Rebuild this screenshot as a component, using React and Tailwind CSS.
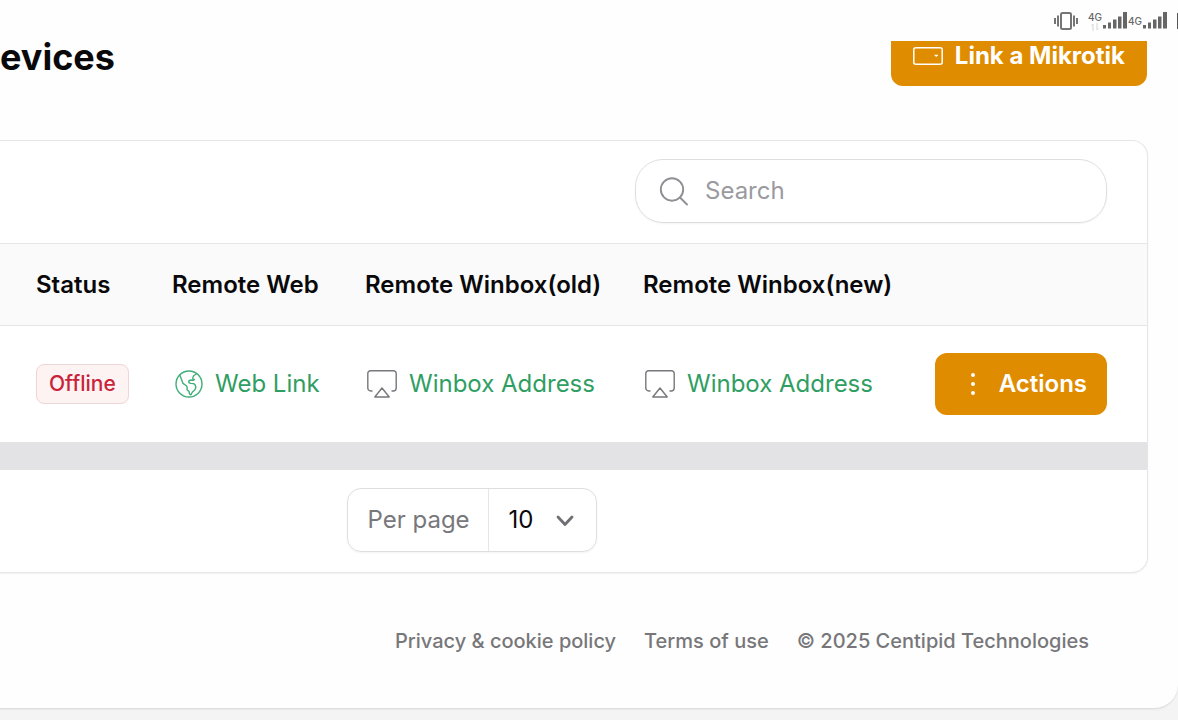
import React, { useState } from 'react'

const footerLinks = ['Privacy & cookie policy', 'Terms of use']
const devices = [{ id: 1, status: 'Offline' }]

function SignalBars() {
  return (
    <svg width="24" height="17" viewBox="0 0 24 17" fill="#666" aria-hidden="true">
      <rect x="0" y="13" width="3" height="3.5" />
      <rect x="5" y="10.5" width="3" height="6" />
      <rect x="10" y="7.5" width="3.5" height="9" />
      <rect x="15" y="4.5" width="3.5" height="12" />
      <rect x="20" y="0" width="4" height="16.5" />
    </svg>
  )
}

function VibrateIcon() {
  return (
    <svg width="24" height="18" viewBox="0 0 24 18" fill="none" stroke="#757575" strokeWidth="2" aria-hidden="true">
      <rect x="7" y="1" width="10" height="16" rx="1.5" />
      <path d="M4 3.5v11M20 3.5v11M1 6v6M23 6v6" />
    </svg>
  )
}

function DeviceIcon() {
  return (
    <svg width="30" height="18" viewBox="0 0 30 18" fill="none" stroke="currentColor" strokeWidth="1.5" aria-hidden="true">
      <rect x="0.8" y="0.8" width="28.4" height="16.4" rx="2" />
      <path d="M21.5 8h3.6l-1.8 1.7z" fill="currentColor" strokeWidth="0.5" />
    </svg>
  )
}

function SearchIcon() {
  return (
    <svg width="30" height="30" viewBox="0 0 30 30" fill="none" stroke="#8f8f94" strokeWidth="1.9" strokeLinecap="round" aria-hidden="true">
      <circle cx="13" cy="13.5" r="11.2" />
      <path d="M21 21.5l7 7" />
    </svg>
  )
}

function GlobeIcon() {
  return (
    <svg width="28" height="28" viewBox="0 0 28 28" fill="none" stroke="#3fae78" strokeWidth="1.4" strokeLinejoin="round" strokeLinecap="round" aria-hidden="true">
      <circle cx="14" cy="14" r="13" />
      <path d="M4.8 5l2 5.2 1.2 3.2 3.4 2.4.8 1.6-.2 2.4 2 1.6.6 2.8 1.4.6 1.4-2.8 2.6-2.2.8-2.6-.6-2.2-1.6-1.4-2.8-.2-2-.8.2-2 2-.6 2.2.4 1.2-1" />
      <path d="M21.5 3.8l-2.8 2-1 2.2.4 1.6" />
    </svg>
  )
}

function AirplayIcon() {
  return (
    <svg width="30" height="28" viewBox="0 0 30 28" fill="none" stroke="#77777c" strokeWidth="1.4" strokeLinecap="round" strokeLinejoin="round" aria-hidden="true">
      <path d="M5 21H3.8A3 3 0 0 1 .8 18V3.5a2.7 2.7 0 0 1 2.7-2.7h23a2.7 2.7 0 0 1 2.7 2.7V18a3 3 0 0 1-3 3H25" />
      <path d="M15 18l7.2 9H7.8z" />
    </svg>
  )
}

function StatusBar() {
  return (
    <div className="flex h-[41px] items-center justify-end pl-4 text-[10px] leading-3 font-medium text-[#666]">
      <VibrateIcon />
      <span className="ml-2.5 flex flex-col items-center">
        4G
        <svg width="8" height="8" viewBox="0 0 8 8" fill="none" stroke="#d2d2d2" aria-hidden="true">
          <path d="M2 8V1L.5 2.500M6 0v7l1.500-1.500" />
        </svg>
      </span>
      <span className="ml-px"><SignalBars /></span>
      <span className="ml-px">4G</span>
      <span className="ml-px"><SignalBars /></span>
      <span className="ml-2.5 h-4 w-px bg-[#555]" />
    </div>
  )
}

function WinboxLink() {
  return (
    <a href="#winbox" className="flex items-center gap-3 pl-0.5 text-[#2f9e63]">
      <AirplayIcon />
      Winbox Address
    </a>
  )
}

export default function App() {
  const [search, setSearch] = useState('')
  const [perPage, setPerPage] = useState('10')

  return (
    <div className="min-h-screen bg-[#f4f4f4] font-[Inter,sans-serif] text-2xl leading-8 text-[#09090b]">
      <div className="overflow-hidden rounded-br-3xl border-b border-[#dedede] bg-[#fefefe] pb-[51px] shadow-xs">
        <StatusBar />

        <header className="flex items-start justify-between pr-[31px]">
          <h1 className="text-4xl leading-8 font-bold">evices</h1>
          <button type="button" className="flex h-[45px] items-start gap-3 rounded-b-xl bg-[#df8c00] px-[22px] font-bold text-white">
            <span className="flex h-[30px] items-center"><DeviceIcon /></span>
            <span className="leading-[30px]">Link a Mikrotik</span>
          </button>
        </header>

        <main className="mt-[54px] pr-[30px]">
          <section className="overflow-hidden rounded-r-2xl border-y border-r border-[#e6e6e8] bg-white shadow-xs">
            <div className="flex justify-end pt-[18px] pr-10 pb-5">
              <label className="flex h-16 w-[472px] items-center gap-4 rounded-[28px] border border-[#dededf] px-[23px] shadow-xs">
                <SearchIcon />
                <input
                  type="search"
                  aria-label="Search"
                  placeholder="Search"
                  value={search}
                  onChange={(e) => setSearch(e.target.value)}
                  className="min-w-0 flex-1 outline-none placeholder:text-[#9a9a9f]"
                />
              </label>
            </div>

            <table className="w-full table-fixed border-t border-[#e6e6e8] text-left">
              <thead className="bg-[#fafafa]">
                <tr className="h-[82px] border-b border-[#e6e6e8]">
                  <th className="w-[172px] pl-9 font-semibold">Status</th>
                  <th className="w-[193px] font-semibold">Remote Web</th>
                  <th className="w-[278px] font-semibold">Remote Winbox(old)</th>
                  <th className="w-[278px] font-semibold">Remote Winbox(new)</th>
                  <td />
                </tr>
              </thead>
              <tbody>
                {devices.map((device) => (
                  <tr key={device.id} className="h-[116px]">
                    <td className="pl-9">
                      <span className="inline-flex h-10 items-center rounded-lg border border-[#eed6d6] bg-[#fdf3f2] px-3 text-[21px] font-medium text-[#c9243a]">
                        {device.status}
                      </span>
                    </td>
                    <td>
                      <a href="#web" className="flex items-center gap-3 pl-[3px] text-[#2f9e63]">
                        <GlobeIcon />
                        Web Link
                      </a>
                    </td>
                    <td><WinboxLink /></td>
                    <td><WinboxLink /></td>
                    <td className="pr-10">
                      <button type="button" className="ml-auto flex h-[62px] w-[172px] items-center justify-end gap-6 rounded-xl bg-[#df8c00] pr-5 font-semibold text-white">
                        <svg width="4" height="22" viewBox="0 0 4 22" fill="currentColor" aria-hidden="true">
                          <circle cx="2" cy="2" r="2" />
                          <circle cx="2" cy="11" r="2" />
                          <circle cx="2" cy="20" r="2" />
                        </svg>
                        Actions
                      </button>
                    </td>
                  </tr>
                ))}
              </tbody>
            </table>

            <div className="h-7 bg-[#e3e3e5]" />

            <div className="flex justify-center pt-[18px] pr-[204px] pb-5">
              <div className="flex h-16 w-[250px] items-stretch rounded-[14px] border border-[#dededf] shadow-xs">
                <label htmlFor="per-page" className="flex flex-1 items-center border-r border-[#e6e6e8] pl-5 text-[#77777c]">
                  Per page
                </label>
                <div className="relative flex w-[107px]">
                  <select
                    id="per-page"
                    value={perPage}
                    onChange={(e) => setPerPage(e.target.value)}
                    className="w-full appearance-none pl-5 outline-none"
                  >
                    <option>10</option>
                    <option>25</option>
                    <option>50</option>
                  </select>
                  <svg className="pointer-events-none absolute top-[26px] right-[22px]" width="18" height="12" viewBox="0 0 18 12" fill="none" stroke="#6f6f74" strokeWidth="2.8" strokeLinecap="round" strokeLinejoin="round" aria-hidden="true">
                    <path d="M2 2l7 7.5L16 2" />
                  </svg>
                </div>
              </div>
            </div>
          </section>
        </main>

        <footer className="mt-[52px] flex items-center justify-end gap-7 pr-[89px] text-xl leading-8 font-medium text-[#77777a]">
          {footerLinks.map((text) => (
            <a key={text} href="#legal">{text}</a>
          ))}
          <span>© 2025 Centipid Technologies</span>
        </footer>
      </div>
    </div>
  )
}
